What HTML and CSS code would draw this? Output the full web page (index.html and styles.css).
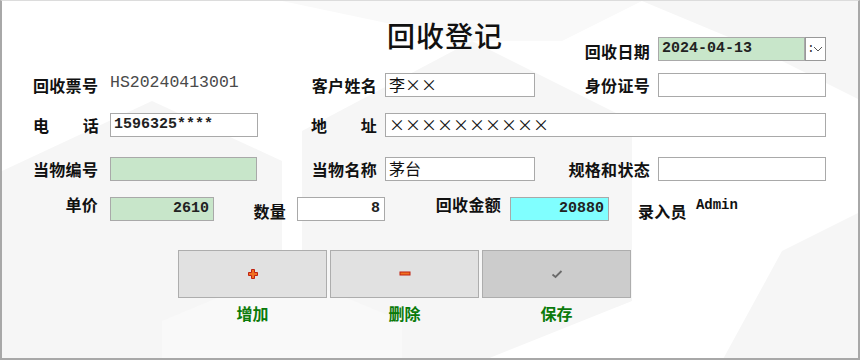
FILE: index.html
```html
<!DOCTYPE html>
<html lang="zh">
<head>
<meta charset="utf-8">
<title>回收登记</title>
<link rel="stylesheet" href="styles.css">
</head>
<body>
<div class="frame">
  <div class="form">
    <div class="row row1">
      <h1 class="title">回收登记</h1>
      <span class="label lbl-r">回收日期</span>
      <div class="field green mono">2024-04-13</div>
      <div class="dropdown"><span class="colon">:</span><svg width="10" height="6" viewBox="0 0 10 6"><polyline points="1,1 5,5 9,1" fill="none" stroke="#555" stroke-width="1"/></svg></div>
    </div>
    <div class="row row2">
      <span class="label">回收票号</span>
      <span class="value">HS20240413001</span>
      <span class="label lbl-r">客户姓名</span>
      <div class="field">李××</div>
      <span class="label lbl-r">身份证号</span>
      <div class="field"></div>
    </div>
    <div class="row row3">
      <span class="label"><span class="just">电话</span></span>
      <div class="field mono">1596325****</div>
      <span class="label lbl-r"><span class="just">地址</span></span>
      <div class="field">××××××××××</div>
    </div>
    <div class="row row4">
      <span class="label">当物编号</span>
      <div class="field green"></div>
      <span class="label lbl-r">当物名称</span>
      <div class="field">茅台</div>
      <span class="label lbl-r">规格和状态</span>
      <div class="field"></div>
    </div>
    <div class="row row5">
      <span class="label lbl-r up">单价</span>
      <div class="field green mono num">2610</div>
      <span class="label lbl-r down">数量</span>
      <div class="field mono num">8</div>
      <span class="label lbl-r up">回收金额</span>
      <div class="field cyan mono num">20880</div>
      <div class="clerk"><span class="label down">录入员</span><span class="admin">Admin</span></div>
    </div>
    <div class="actions">
      <div class="action">
        <button class="btn" type="button"><svg width="12" height="12" viewBox="0 0 12 12"><path d="M4.5 1.5h3v3h3v3h-3v3h-3v-3h-3v-3h3z" fill="#f07020" stroke="#c02010" stroke-width="1"/></svg></button>
        <span class="caption">增加</span>
      </div>
      <div class="action">
        <button class="btn" type="button"><svg width="12" height="6" viewBox="0 0 12 6"><rect x="1" y="1" width="10" height="3" fill="#f07020" stroke="#c02010" stroke-width="1"/></svg></button>
        <span class="caption">删除</span>
      </div>
      <div class="action">
        <button class="btn btn-dim" type="button"><svg width="12" height="10" viewBox="0 0 12 10"><polyline points="1.5,5.5 4.5,8 10.5,2" fill="none" stroke="#6a6a6a" stroke-width="1.8"/></svg></button>
        <span class="caption">保存</span>
      </div>
    </div>
  </div>
</div>
</body>
</html>
```

FILE: styles.css
```css
* { box-sizing: border-box; }

html, body {
  margin: 0;
  padding: 0;
  background: #ffffff;
}

.frame {
  width: 860px;
  height: 360px;
  border-left: 2px solid #a8a8a8;
  border-top: 1px solid #dcdcdc;
  border-right: 2px solid #a8a8a8;
  border-bottom: 2px solid #a8a8a8;
  background-color: #ffffff;
  background-image: url("data:image/svg+xml;utf8,<svg xmlns='http://www.w3.org/2000/svg' width='860' height='360'><g fill='%23f6f6f6'><polygon points='0,170 150,100 280,160 280,300 160,360 0,360'/><polygon points='300,130 470,40 630,120 630,300 480,360 300,360'/><polygon points='640,0 860,0 860,100 760,50'/><polygon points='780,250 860,210 860,360 720,360'/></g><g fill='%23f9f9f9'><polygon points='280,0 640,0 560,40 470,40'/><polygon points='160,320 280,270 400,320 400,360 160,360'/></g></svg>");
  background-repeat: no-repeat;
  font-family: "Noto Sans CJK SC", "Noto Sans", sans-serif;
  color: #111;
}

.form {
  display: flex;
  flex-direction: column;
  padding-top: 19px;
  padding-left: 31px;
}

.row {
  display: grid;
  align-items: center;
  height: 24px;
}

.row1 {
  height: 41px;
  align-items: end;
  grid-template-columns: 354px 196px 75px 147px 21px;
  margin-left: -31px;
  padding-left: 31px;
}
.row1 .title { grid-column: 2; }

.row2 { margin-top: 12px; grid-template-columns: 77px 202px 73px 150px 123px 168px; }
.row3 { margin-top: 16px; grid-template-columns: 77px 148px 127px 441px; }
.row4 { margin-top: 20px; grid-template-columns: 77px 147px 128px 150px 123px 168px; }
.row5 { margin-top: 16px; grid-template-columns: 77px 104px 83px 88px 125px 99px 150px; }

.title {
  margin: 0;
  align-self: start;
  font-size: 28px;
  line-height: 30px;
  font-weight: 500;
  letter-spacing: 1px;
  color: #111;
}

.label {
  font-size: 16px;
  font-weight: 700;
  line-height: 20px;
  letter-spacing: 0.3px;
  white-space: nowrap;
  color: #111;
}

.lbl-r {
  justify-self: end;
  padding-right: 8px;
}
.row5 .lbl-r { padding-right: 12px; }
.row5 .lbl-r:nth-child(3) { padding-right: 11px; }
.row5 .lbl-r:nth-child(5) { padding-right: 9px; }
.up { align-self: start; margin-top: -3px; }
.down { margin-top: 4px; }

.just {
  display: inline-block;
  width: 66px;
  text-align: justify;
  text-align-last: justify;
}

.value {
  font-family: "Liberation Mono", monospace;
  font-size: 16.5px;
  line-height: 20px;
  color: #4a4a4a;
  margin-top: -4px;
}

.field {
  height: 24px;
  border: 1px solid #a9a9a9;
  background: #ffffff;
  padding: 0 3px;
  font-size: 16px;
  line-height: 21px;
  white-space: nowrap;
  overflow: hidden;
  color: #111;
}

.mono {
  font-family: "Liberation Mono", monospace;
  font-size: 15px;
  font-weight: 700;
  line-height: 22px;
  color: #222;
}

.num { text-align: right; padding-right: 4px; }

.green { background: #c8e6ca; }
.cyan { background: #80ffff; }

.dropdown {
  height: 24px;
  border: 1px solid #999;
  background: #fff;
  display: flex;
  align-items: center;
  gap: 2px;
  padding-left: 1px;
  overflow: hidden;
}
.colon {
  font-family: "Liberation Mono", monospace;
  font-size: 13px;
  line-height: 16px;
  color: #333;
  width: 4px;
}

.clerk {
  display: flex;
  align-items: flex-start;
  padding-left: 29px;
  gap: 9px;
}
.clerk .label { margin-top: 4px; }
.admin {
  font-family: "Liberation Mono", monospace;
  font-size: 14px;
  font-weight: 700;
  line-height: 16px;
  margin-top: 0;
  color: #111;
}

.actions {
  display: grid;
  grid-template-columns: 149px 149px 149px;
  column-gap: 3px;
  margin-top: 29px;
  margin-left: 145px;
}

.action {
  display: flex;
  flex-direction: column;
  align-items: center;
}

.btn {
  width: 149px;
  height: 48px;
  border: 1px solid #adadad;
  background: #e1e1e1;
  display: flex;
  align-items: center;
  justify-content: center;
  padding: 0;
  margin: 0;
}
.btn-dim { background: #cccccc; }

.caption {
  margin-top: 5px;
  font-size: 16px;
  font-weight: 700;
  line-height: 20px;
  color: #0a7a0a;
}
```
